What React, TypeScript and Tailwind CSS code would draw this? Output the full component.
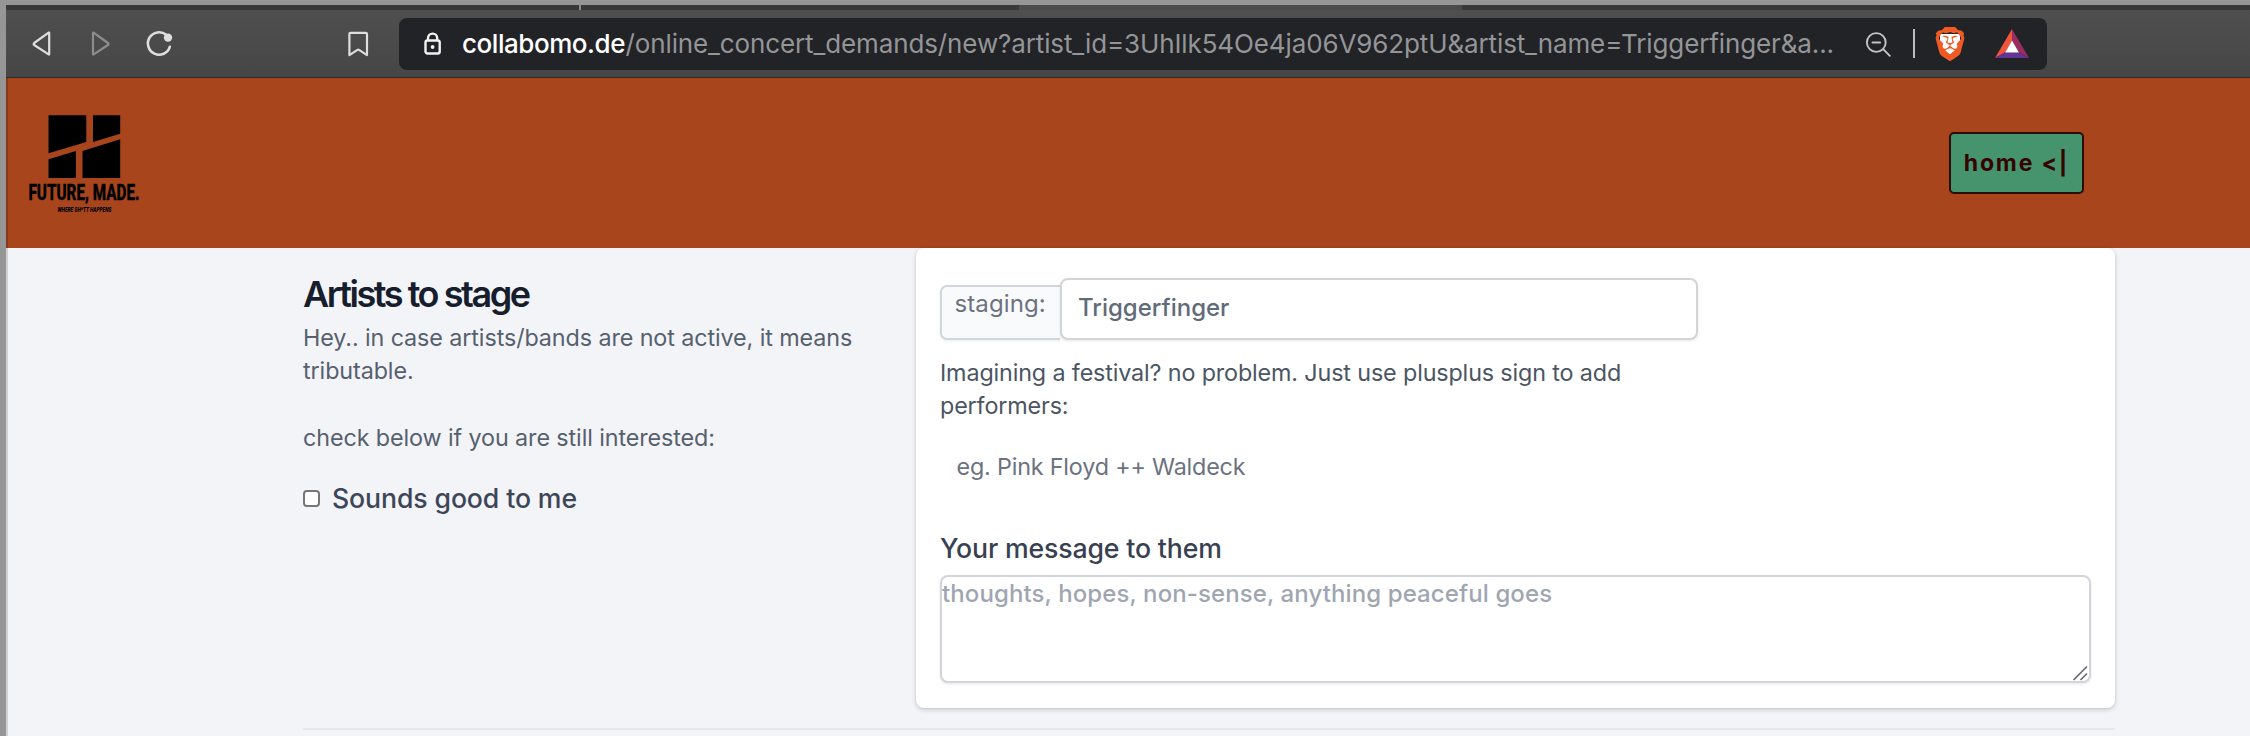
import { SiBrave } from 'react-icons/si';

function Toolbar() {
  return (
    <div className="flex h-[68px] items-center border-b border-[#262a2a] bg-gradient-to-b from-[#4f4f4f] to-[#464646] pl-[25px]">
      <svg className="h-7 w-6" viewBox="0 0 24 28" fill="none" stroke="#dedede" strokeWidth="2.2" strokeLinejoin="round">
        <path d="M18.2 2.8v21.4q0 .6-.6.2L3.2 15q-1.2-1 0-2L17.600 2.600q.6-.4.6.2Z" />
      </svg>
      <svg className="ml-[31px] h-7 w-6" viewBox="0 0 24 28" fill="none" stroke="#8d8d8d" strokeWidth="2.2" strokeLinejoin="round">
        <path d="M7 2.8v21.4q0 .6.6.2L22 15q1.200-1 0-2L7.600 2.600q-.6-.4-.6.2Z" />
      </svg>
      <svg className="ml-[34px] h-7 w-8" viewBox="0 0 32 28" fill="none">
        <path d="M22.200 4.800A11.200 11.200 0 1 0 25.800 16.800" stroke="#dedede" strokeWidth="2.600" strokeLinecap="round" />
        <circle cx="24" cy="7.600" r="4.200" fill="#dedede" />
      </svg>
      <svg className="ml-[171px] h-7 w-6" viewBox="0 0 24 28" fill="none" stroke="#dedede" strokeWidth="2.200" strokeLinejoin="round">
        <path d="M3.700 2.800h15q1.300 0 1.300 1.300v21l-8-5.200q-.8-.5-1.600 0L2.400 25.100v-21q0-1.300 1.300-1.300Z" />
      </svg>
      <div className="ml-[28px] flex h-[52px] w-[1648px] shrink-0 items-center rounded-lg bg-[#222327]">
        <svg className="ml-[24px] h-6 w-5 shrink-0" viewBox="0 0 20 24" fill="none" stroke="#f2f2f2" strokeWidth="2.400">
          <rect x="2.500" y="8.500" width="14.200" height="13" rx="2" />
          <path d="M5 8.500V6.200a4.600 4.600 0 0 1 9.200 0v2.300" />
          <circle cx="9.600" cy="15" r="1.900" fill="#f2f2f2" stroke="none" />
        </svg>
        <div className="ml-[19px] flex w-[1400px] whitespace-pre text-[26px] leading-[52px]">
          <span className="w-[163.500px] font-medium tracking-[-0.450px] text-white">collabomo.de</span>
          <span className="tracking-[-0.120px] text-[#949597]">
            /online_concert_demands/new?artist_id=3UhIlk54Oe4ja06V962ptU&amp;artist_name=Triggerfinger&amp;a...
          </span>
        </div>
        <svg className="ml-[3px] h-[26px] w-[26px] shrink-0" viewBox="0 0 26 26" fill="none" stroke="#c4c4c4" strokeWidth="1.900" strokeLinecap="round">
          <circle cx="11.300" cy="11.500" r="9.400" />
          <path d="m18.200 18.200 6.600 6.600M7.500 11.500h7.600" />
        </svg>
        <div className="ml-[22px] h-[29px] w-[2px] bg-[#bdbdbd]" />
        <div className="relative ml-[17px] grid h-[40px] w-[36px] place-items-center">
          <svg className="absolute h-[36px] w-[30px]" viewBox="0 0 30 36">
            <path d="M5 8h20v12l-6 10h-8l-6-10Z" fill="#fff" />
          </svg>
          <SiBrave className="relative h-[34px] w-[34px] text-[#f05a24]" />
        </div>
        <svg className="ml-[27px] h-[29px] w-[34px] shrink-0" viewBox="0 0 34 29">
          <path d="M17 0 0 29l10.300-5.800L17 11.500Z" fill="#f1563a" />
          <path d="M17 0l17 29-10.300-5.800L17 11.500Z" fill="#9a2d5f" />
          <path d="M0 29h34l-10.300-5.800H10.300Z" fill="#643394" />
          <path d="m17 11.500 6.900 11.900H10.100Z" fill="#fff" />
        </svg>
      </div>
    </div>
  );
}

function Logo() {
  return (
    <svg className="h-[112px] w-[124px] overflow-visible" viewBox="0 0 124 112">
      <path d="M21.500 3.300h37.800v26.800L21.500 41.300ZM66 3.300h27.200v18.500L66 30.100ZM21.500 47.300l27.400-8.200v26.800H21.500ZM55.500 39.100l37.700-11.800v38.600H55.500Z" fill="#000" />
      <text x="1.500" y="88.300" textLength="111" lengthAdjust="spacingAndGlyphs" fontFamily="Roboto, sans-serif" fontWeight="800" fontSize="22" fill="#000" stroke="#000" strokeWidth="0.400">
        FUTURE, MADE.
      </text>
      <text x="30.500" y="100" textLength="54" lengthAdjust="spacingAndGlyphs" fontFamily="Roboto, sans-serif" fontStyle="italic" fontWeight="900" fontSize="7" fill="#000">
        WHERE SH*TT HAPPENS
      </text>
    </svg>
  );
}

function Intro() {
  return (
    <div className="w-[613px] shrink-0 pt-[26px]">
      <h3 className="text-[36px] font-semibold leading-10 tracking-[-2.450px] text-[#161e2e]">Artists to stage</h3>
      <p className="mt-[7px] text-[23.333px] leading-[33.300px] tracking-[-0.100px] text-[#56606f]">
        Hey.. in case artists/bands are not active, it means
        <br />
        tributable.
        <br />
        <br />
        check below if you are still interested:
      </p>
      <label className="mt-[24px] flex h-10 items-center">
        <input type="checkbox" className="h-[17px] w-[17px] appearance-none rounded-[4px] border-2 border-[#767676] bg-white" />
        <span className="ml-[12px] text-[26.667px] font-[550] leading-10 tracking-[-0.120px] text-[#3d4657]">Sounds good to me</span>
      </label>
    </div>
  );
}

function ArtistForm() {
  return (
    <div className="h-[459.500px] w-[1199px] rounded-[8px] bg-white px-6 pt-[29.500px] shadow-[0_2px_5px_rgba(0,0,0,0.16),0_0_3px_rgba(0,0,0,0.08)]">
      <div className="flex items-end">
        <span className="h-[54.500px] w-[120px] rounded-l-[7px] border-2 border-r-0 border-[#d2d6dc] bg-[#f9fafb] pl-[12.500px] text-[24px] leading-[34px] tracking-[0.100px] text-[#6b7280] shadow-[0_1px_3px_rgba(0,0,0,0.08)]">
          staging:
        </span>
        <input
          className="h-[62px] w-[638px] rounded-[8px] border-2 border-[#d2d4d6] bg-white pb-[2px] pl-[16px] text-[24px] font-[450] text-[#5f6b79] shadow-[0_1px_3px_rgba(0,0,0,0.1)]"
          defaultValue="Triggerfinger"
        />
      </div>
      <p className="mt-[16px] text-[23.333px] leading-[33.300px] tracking-[-0.140px] text-[#4b5563]">
        Imagining a festival? no problem. Just use plusplus sign to add
        <br />
        performers:
      </p>
      <p className="mt-[27.500px] pl-[16.500px] text-[23.333px] leading-[33.300px] tracking-[-0.180px] text-[#6b7280]">
        eg. Pink Floyd ++ Waldeck
      </p>
      <label className="mt-[45.500px] block text-[26.667px] font-[550] leading-10 tracking-[-0.150px] text-[#374151]">
        Your message to them
      </label>
      <div className="relative mt-[7px]">
        <textarea
          className="block h-[108px] w-[1151px] resize-none rounded-[8px] border-2 border-[#d2d6dc] bg-white text-[24px] font-[450] leading-[33px] tracking-[0.100px] shadow-[0_1px_3px_rgba(0,0,0,0.1)] placeholder:text-[#9fa6b2]"
          placeholder="thoughts, hopes, non-sense, anything peaceful goes"
        />
        <svg className="absolute bottom-[2px] right-[3px] h-4 w-4" viewBox="0 0 16 16" stroke="#666" strokeWidth="1.600">
          <path d="M1.500 15 15 1.500M8.500 15 15 8.500" />
        </svg>
      </div>
    </div>
  );
}

export default function App() {
  return (
    <div className="flex h-[736px] w-[2250px] overflow-hidden bg-[#969696] pl-[6px] pt-[5px] font-['Inter',sans-serif]">
      <main className="flex w-full flex-col bg-[#f3f4f8]">
        <div className="flex h-[5px] shrink-0 bg-[#393939]">
          <div className="w-[573px]" />
          <div className="w-[2px] bg-[#8a8a8a]" />
          <div className="w-[438px]" />
          <div className="w-[443px] bg-[#4b4b4b]" />
        </div>
        <Toolbar />
        <header className="flex h-[170px] shrink-0 items-start justify-between border-l-2 border-[#803a20] bg-[#a8451d] pl-[19px] pr-[166px]">
          <div className="pt-[34px]">
            <Logo />
          </div>
          <button className="mt-[54px] h-[62px] w-[135px] rounded-[5px] border-2 border-[#2b0d06] bg-[#45946d] text-[23px] font-bold tracking-[1.800px] text-[#350400]">
            home &lt;|
          </button>
        </header>
        <section className="flex flex-1 flex-col border-l-2 border-[#d0d1d3] pl-[295px]">
          <div className="flex">
            <Intro />
            <ArtistForm />
          </div>
          <hr className="mt-[20px] w-[1812px] border-t-2 border-[#e5e7eb]" />
        </section>
      </main>
    </div>
  );
}
